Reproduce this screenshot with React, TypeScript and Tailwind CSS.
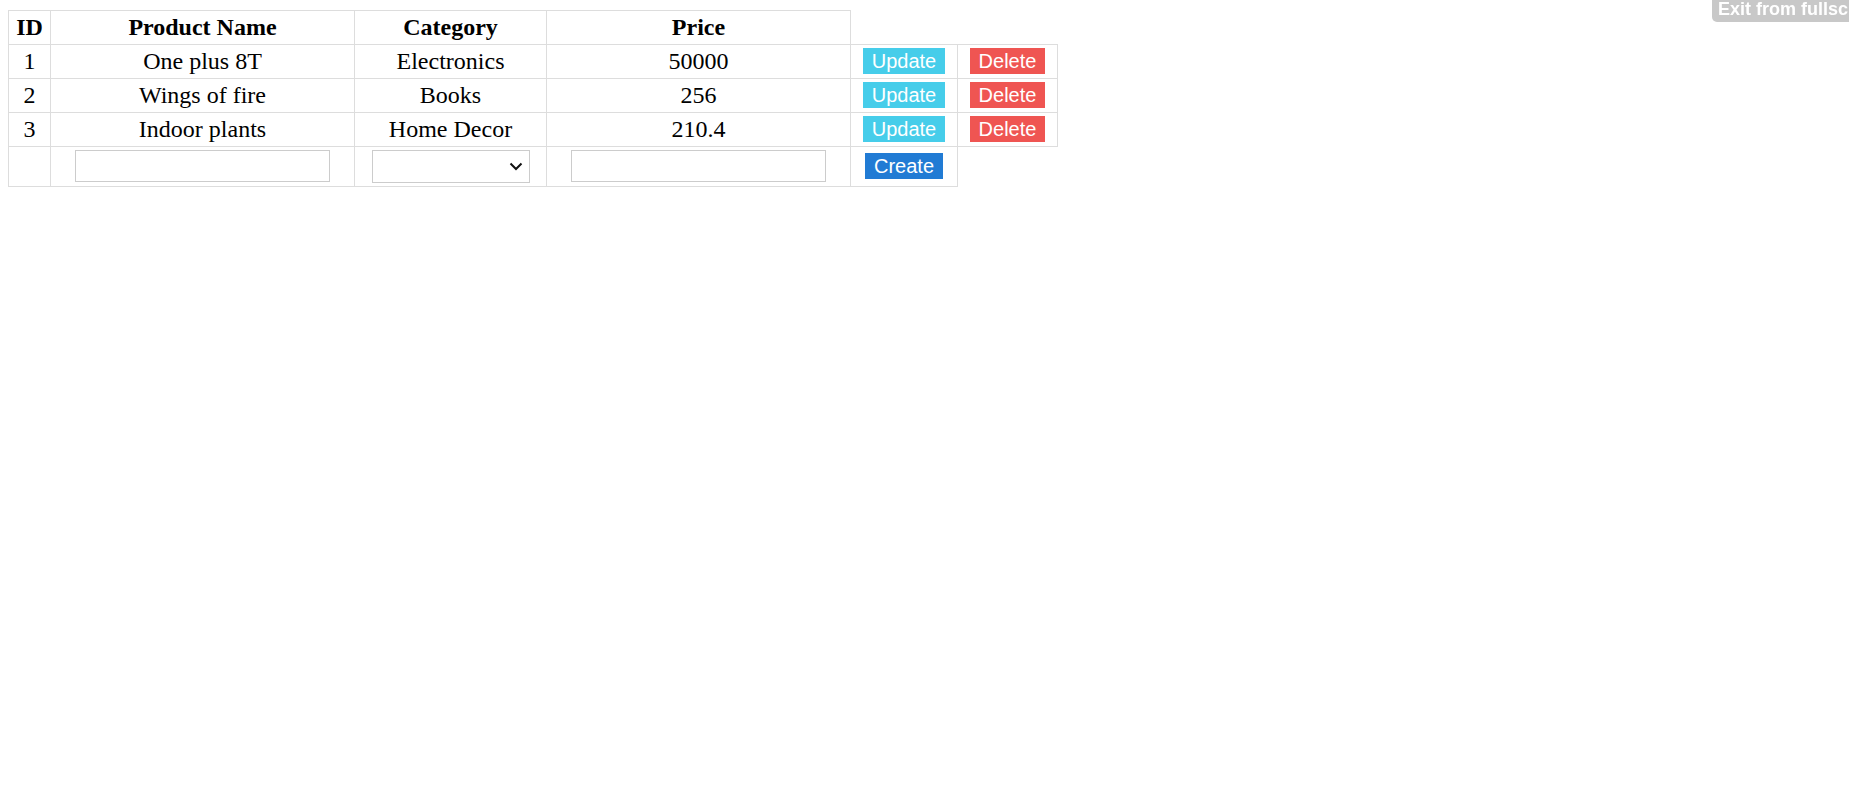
import { FunctionComponent } from "react";

type Product = { id: number; name: string; category: string; price: string };

const products: Product[] = [
  { id: 1, name: "One plus 8T", category: "Electronics", price: "50000" },
  { id: 2, name: "Wings of fire", category: "Books", price: "256" },
  { id: 3, name: "Indoor plants", category: "Home Decor", price: "210.4" },
];

const cell = "border border-solid border-[#dddddd] py-[3px] px-0 text-center align-middle";
const topCell = "border border-solid border-[#dddddd] py-[3px] px-0 text-center align-top";
const btn =
  "h-[26px] px-[9px] py-px text-[20px] leading-[24px] text-white font-['Liberation_Sans',Arial,sans-serif] border-0 rounded-none cursor-pointer";

const App: FunctionComponent = () => {
  return (
    <div className="min-h-screen bg-white pt-[10px] pl-2 text-black font-['Liberation_Serif','Times_New_Roman',serif] text-[24px] leading-[27px]">
      <table className="table-fixed border-collapse w-[1050px]">
        <colgroup>
          <col className="w-[42px]" />
          <col className="w-[304px]" />
          <col className="w-[192px]" />
          <col className="w-[304px]" />
          <col className="w-[107px]" />
          <col className="w-[100px]" />
        </colgroup>
        <thead>
          <tr>
            <th className={`${cell} font-bold`}>ID</th>
            <th className={`${cell} font-bold`}>Product Name</th>
            <th className={`${cell} font-bold`}>Category</th>
            <th className={`${cell} font-bold`}>Price</th>
          </tr>
        </thead>
        <tbody>
          {products.map((p) => (
            <tr key={p.id}>
              <td className={cell}>{p.id}</td>
              <td className={cell}>{p.name}</td>
              <td className={cell}>{p.category}</td>
              <td className={cell}>{p.price}</td>
              <td className={topCell}>
                <div className="flex justify-center">
                  <button className={`${btn} bg-[#46cdea]`}>Update</button>
                </div>
              </td>
              <td className={topCell}>
                <div className="flex justify-center">
                  <button className={`${btn} bg-[#ef5552]`}>Delete</button>
                </div>
              </td>
            </tr>
          ))}
          <tr>
            <td className={topCell}></td>
            <td className={topCell}>
              <div className="flex justify-center">
                <input
                  type="text"
                  className="w-[255px] h-[32px] border border-solid border-[#cccccc] bg-white outline-none"
                />
              </div>
            </td>
            <td className={topCell}>
              <div className="flex justify-center">
                <div className="relative w-[158px] h-[33px]">
                  <select className="appearance-none w-full h-full border border-solid border-[#cccccc] bg-white outline-none" />
                  <svg
                    className="absolute right-[7px] top-[12px] pointer-events-none"
                    width="14"
                    height="9"
                    viewBox="0 0 14 9"
                    fill="none"
                  >
                    <path d="M1.5 1.5 L7 7 L12.5 1.5" stroke="#111111" strokeWidth="2" />
                  </svg>
                </div>
              </div>
            </td>
            <td className={topCell}>
              <div className="flex justify-center">
                <input
                  type="text"
                  className="w-[255px] h-[32px] border border-solid border-[#cccccc] bg-white outline-none"
                />
              </div>
            </td>
            <td className={topCell}>
              <div className="flex h-[32px] items-center justify-center">
                <button className={`${btn} bg-[#217bd4]`}>Create</button>
              </div>
            </td>
          </tr>
        </tbody>
      </table>

      <div className="fixed top-0 right-0 w-[137px] h-[22px] overflow-hidden rounded-bl-[5px] bg-[#c8c8c8]">
        <span className="block whitespace-nowrap pl-[6px] -mt-[2px] text-[18px] leading-[22px] font-bold text-white font-['Liberation_Sans',Arial,sans-serif]">
          Exit from fullscreen
        </span>
      </div>
    </div>
  );
};

export default App;
